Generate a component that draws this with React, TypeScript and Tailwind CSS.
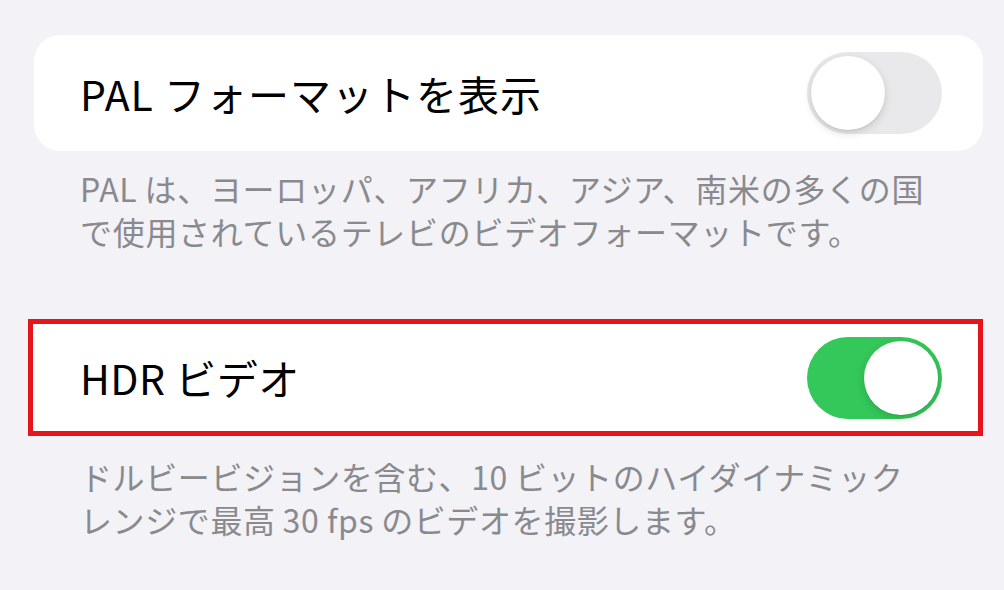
import React from "react";

const font = { fontFamily: '"Noto Sans CJK JP", "Noto Sans", sans-serif' };

function Toggle({ on }: { on: boolean }) {
  return (
    <div
      className={
        "relative w-[135px] h-[82px] rounded-full shrink-0 " +
        (on ? "bg-[#34c759]" : "bg-[#e9e9eb]")
      }
    >
      <div
        className={
          "absolute top-[4px] w-[74px] h-[74px] rounded-full bg-white shadow-[0_3px_8px_rgba(0,0,0,0.15),0_1px_1px_rgba(0,0,0,0.06)] " +
          (on ? "right-[4px]" : "left-[4px]")
        }
      />
    </div>
  );
}

export default function App() {
  return (
    <div
      className="w-[1004px] h-[590px] bg-[#f2f2f7] overflow-hidden flex flex-col pt-[35px]"
      style={font}
    >
      <div className="ml-[34px] w-[949px] h-[116px] rounded-[26px] bg-white flex items-center justify-between pl-[46px] pr-[41px]">
        <span className="text-[41px] leading-none text-black tracking-[1px]">PAL フォーマットを表示</span>
        <Toggle on={false} />
      </div>
      <div className="mt-[16px] pl-[80px] text-[32px] leading-[43px] tracking-[0.7px] text-[#8a8a8e]">
        PAL{"\u2009"}は、ヨーロッパ、アフリカ、アジア、南米の多くの国
        <br />
        で使用されているテレビのビデオフォーマットです。
      </div>
      <div className="mt-[66px] ml-[28px] w-[955px] h-[117px] border-[5px] border-[#e8141b] bg-white flex items-center justify-between pl-[47px] pr-[36px]">
        <span className="text-[41px] leading-none text-black tracking-[0.5px]">HDR ビデオ</span>
        <Toggle on={true} />
      </div>
      <div className="mt-[19px] pl-[80px] text-[32px] leading-[43px] tracking-[0.6px] text-[#8a8a8e]">
        ドルビービジョンを含む、10{"\u2009"}ビットのハイダイナミック
        <br />
        レンジで最高{"\u2009"}30 fps{"\u2009"}のビデオを撮影します。
      </div>
    </div>
  );
}
